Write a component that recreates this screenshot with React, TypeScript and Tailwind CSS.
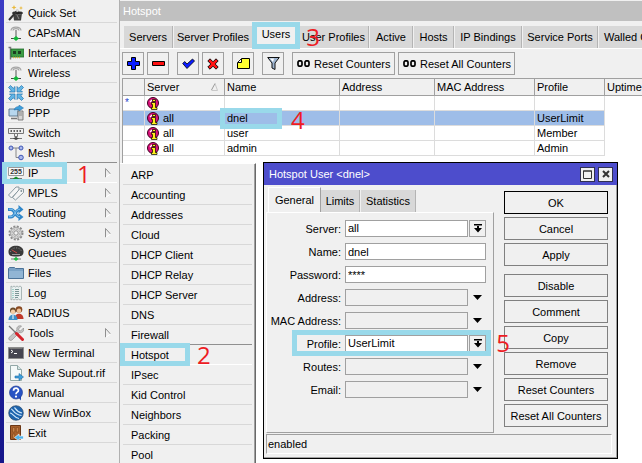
import React from "react";

type Kids = { children: React.ReactNode };

const Svg = ({ children }: Kids) => (
  <svg width="16" height="16" viewBox="0 0 16 16" className="shrink-0" aria-hidden="true">
    {children}
  </svg>
);

const Antenna = () => (
  <Svg>
    <path d="M3 5.500C3.500 1 12.500 1 13 5.500M5 5.500C5.500 3 10.500 3 11 5.500" fill="none" stroke="#a5a5a5" strokeWidth="1.200" />
    <path d="M8 5v8" stroke="#8a8a8a" strokeWidth="1.500" />
    <path d="M3 13.500h10" stroke="#444" strokeWidth="1" />
    <path d="M5 13.500l3-2.500 3 2.500-3 2.500z" fill="#12b83a" />
  </Svg>
);

const icons: Record<string, React.ReactNode> = {
  wand: (
    <Svg>
      <path d="M5 8h9l-1 7.500H6z" fill="#3f3f3f" />
      <ellipse cx="9.500" cy="8" rx="5.500" ry="1.600" fill="#222" stroke="#777" strokeWidth=".7" />
      <path d="M1 15L10 5" stroke="#333" strokeWidth="2" />
      <path d="M8.500 6.500L10.500 4.500" stroke="#ddd" strokeWidth="2" />
      <path d="M6 0l.7 1.800L8.500 2.500l-1.800.7L6 5l-.7-1.800L3.500 2.500l1.800-.7zM13 1l.6 1.400L15 3l-1.400.6L13 5l-.6-1.400L11 3l1.400-.6z" fill="#e9b93c" />
      <path d="M9 10l2 4" stroke="#888" />
    </Svg>
  ),
  antenna: <Antenna />,
  card: (
    <Svg>
      <path d="M.5 2.500h2v12" fill="none" stroke="#777" strokeWidth="1.500" />
      <path d="M3 4h13v8H3z" fill="#3c9c46" stroke="#1f6b2a" strokeWidth=".8" />
      <path d="M5 6h3v3H5zM10 6h3v3h-3z" fill="#1d3f22" />
      <path d="M5 12.500h8" stroke="#d1b13a" strokeWidth="1.500" strokeDasharray="1 1" />
    </Svg>
  ),
  bridge: (
    <Svg>
      <g fill="#62b6e6" stroke="#2272ad" strokeWidth=".7">
        <path d="M7 7H1.500l1.700-1.700L.5 2.500l2-2 2.800 2.700L7 1.500z" />
        <path d="M9 7h5.500l-1.700-1.700 2.700-2.800-2-2-2.800 2.700L9 1.500z" />
        <path d="M7 9v5.500l-1.700-1.700-2.800 2.700-2-2 2.700-2.800L1.500 9z" />
        <path d="M9 9v5.500l1.700-1.700 2.800 2.700 2-2-2.700-2.800L14.500 9z" />
      </g>
    </Svg>
  ),
  ppp: (
    <Svg>
      <path d="M1 4h9v7H1z" fill="#b7d7ee" stroke="#607b90" />
      <path d="M3 13.500h6" stroke="#777" strokeWidth="1.500" />
      <path d="M10 6h5v9h-5z" fill="#d5d5d5" stroke="#666" strokeWidth=".8" />
      <path d="M11 8h3M11 10h3" stroke="#777" strokeWidth=".8" />
      <path d="M6 5c1-3 3-3.500 5-3.500V0l4.500 3-4.500 3V4.500C9 4.500 8 4.500 6 5z" fill="#3d9fdc" stroke="#1e6ba5" strokeWidth=".5" />
    </Svg>
  ),
  switch: (
    <Svg>
      <path d="M.5 3.500h15v5H.5z" fill="#eee" stroke="#777" />
      <path d="M2.500 6h11" stroke="#333" strokeWidth="1.500" strokeDasharray="1.500 1.500" />
      <path d="M6.500 9v2.500h3V9M8 11v2M2 13.500h12" fill="none" stroke="#777" />
      <path d="M5 13.500l3-1.500 3 1.500-3 1.500z" fill="#444" />
    </Svg>
  ),
  mesh: (
    <Svg>
      <path d="M3 3h10M8 3v9.500h5" fill="none" stroke="#888" />
      <g fill="#a9b8ec" stroke="#3f56b5">
        <circle cx="3" cy="3" r="2" />
        <circle cx="13" cy="3" r="2" />
        <circle cx="13" cy="12.500" r="2.300" />
      </g>
    </Svg>
  ),
  ip: (
    <Svg>
      <path d="M.5 2.500h15v8H.5z" fill="#fafafa" stroke="#999" />
      <text x="8" y="9" textAnchor="middle" fontSize="7" fontWeight="bold" fill="#333" fontFamily="'Liberation Sans', sans-serif">
        255
      </text>
      <path d="M2 13.500h12" stroke="#777" />
      <path d="M5 13.500l3-2 3 2-3 2z" fill="#148a2c" />
    </Svg>
  ),
  tags: (
    <Svg>
      <g fill="#f5f5f5" stroke="#7f9097" strokeWidth=".9">
        <path d="M.5 10l7.500-8h3v3l-7.500 8z" />
        <path d="M4.500 12.500l7.500-9 3.500.5v3.500l-8 7.500z" />
      </g>
      <circle cx="13.300" cy="6" r=".9" fill="#7f9097" />
    </Svg>
  ),
  routing: (
    <Svg>
      <g fill="none" stroke="#2f86c9" strokeWidth="3">
        <path d="M0 4.500h3c4 0 4 7.500 9 7.500" />
        <path d="M0 12h3c4 0 4-7.500 9-7.500" />
      </g>
      <path d="M10.500 0l5 4.500-5 4zM10.500 8l5 4-5 4z" fill="#2f86c9" />
      <path d="M1 4.200h2c4 0 4 7.500 9 7.500M1 11.700h2c4 0 4-7.500 9-7.500" fill="none" stroke="#86c6f0" />
    </Svg>
  ),
  gear: (
    <Svg>
      <circle cx="8" cy="8" r="6.500" fill="none" stroke="#8b8b8b" strokeWidth="2" strokeDasharray="2 1.400" />
      <circle cx="8" cy="8" r="5.500" fill="#d9d9d9" stroke="#999" strokeWidth=".8" />
      <circle cx="8" cy="8" r="2.200" fill="#f3f3f3" stroke="#888" strokeWidth=".9" />
      <circle cx="8" cy="8" r="3.900" fill="none" stroke="#aaa" strokeWidth=".9" strokeDasharray="2 1" />
    </Svg>
  ),
  gauge: (
    <Svg>
      <path d="M.5 7C0-1.500 16-1.500 15.500 7c0 1.500-.5 2.500-1.500 3.500-2 1.300-10 1.300-12 0C1 9.500.5 8.500.5 7z" fill="#3a3a3a" />
      <path d="M2.500 7C3 1.500 13 1.500 13.500 7" fill="none" stroke="#888" strokeDasharray="1 1.500" />
      <path d="M4 5l5 3" stroke="#c44" />
      <path d="M4 9.500h8" stroke="#999" />
      <path d="M8 11v2M3 14h10" stroke="#777" />
      <path d="M5.500 14L8 12l2.500 2L8 16z" fill="#1dc340" />
    </Svg>
  ),
  folder: (
    <Svg>
      <path d="M.5 3.500l1-1h5l1 1h8v10H.5z" fill="#7ba3c6" stroke="#4c7398" />
      <path d="M1 6h14v7H1z" fill="#91b5d4" />
    </Svg>
  ),
  log: (
    <Svg>
      <path d="M3 1l1.500 1L6 1l1.500 1L9 1l1.500 1L12 1l1.500 1v12.500L12 15l-1.500-1L9 15l-1.500-1L6 15l-1.500-1L3 15z" fill="#e9f0f0" stroke="#98a7a7" strokeWidth=".8" />
      <path d="M7 4.500h4M7 6.500h4M7 8.500h4M7 10.500h4M7 12.500h3" stroke="#6d8b8b" strokeWidth=".9" />
      <path d="M5 4v9" stroke="#5fb3a6" strokeDasharray="1 1" />
    </Svg>
  ),
  people: (
    <Svg>
      <circle cx="11" cy="4.500" r="3.300" fill="#8a4a22" />
      <circle cx="11" cy="5.800" r="2.200" fill="#f0c39a" />
      <path d="M6.500 14c0-7 9-7 9 0z" fill="#c0392b" />
      <circle cx="5" cy="5.500" r="3" fill="#6b4a2a" />
      <circle cx="5" cy="6.700" r="2.200" fill="#f4cca5" />
      <path d="M.5 15c0-7 9-7 9 0z" fill="#3e8fc9" />
      <path d="M5 10v4" stroke="#fff" />
    </Svg>
  ),
  tools: (
    <Svg>
      <path d="M13.500 1l-3 3 .5 1.500 1.500.5 3-3c1 3-1.500 5.500-4 4.500L4 15c-2 1.500-4-1-3-2.500L9 5C8 2 11 0 13.500 1z" fill="#c4c4c4" stroke="#858585" strokeWidth=".6" />
      <path d="M1 1l8 8" stroke="#777" strokeWidth="1.300" />
      <path d="M8.500 8.500l6 6" stroke="#d4232b" strokeWidth="3" strokeLinecap="round" />
    </Svg>
  ),
  terminal: (
    <Svg>
      <path d="M.5 2.500h15v11H.5z" fill="#454550" stroke="#8d8d8d" />
      <path d="M1.500 3.500h13" stroke="#777" />
      <path d="M3 5l2 1.500L3 8M6 8.500h3" fill="none" stroke="#fff" />
    </Svg>
  ),
  supout: (
    <Svg>
      <path d="M2.500.5h7l4 4v11h-11z" fill="#f4f9f9" stroke="#93a8a8" />
      <path d="M9.500.5v4h4" fill="#d4e4e4" stroke="#93a8a8" />
      <path d="M7 11h4V8.500l4.500 3.500-4.500 3.500V13H7z" fill="#3d9fdc" stroke="#1e6ba5" strokeWidth=".6" />
    </Svg>
  ),
  manual: (
    <Svg>
      <path d="M10 12l3 3.500v-6z" fill="#2246b0" />
      <circle cx="8" cy="7.500" r="6.500" fill="#2853c4" stroke="#1c3a94" strokeWidth=".7" />
      <path d="M5.500 5.700C5.700 2.300 10.700 2.500 10.400 5.600 10.200 7.300 8 7.200 8 9.300" fill="none" stroke="#fff" strokeWidth="1.700" />
      <circle cx="8" cy="11.600" r="1.100" fill="#fff" />
    </Svg>
  ),
  winbox: (
    <Svg>
      <circle cx="8" cy="8" r="7.300" fill="#1d64ae" stroke="#2c4b6b" strokeWidth=".7" />
      <path d="M3 4C5 4 6 10 13.500 10.500M6.500 2.500c1 1 2 4.500 7.500 5.500M2 8c3 0 4 5 9 5.500" fill="none" stroke="#cfe6fa" strokeWidth="1.200" />
    </Svg>
  ),
  exit: (
    <Svg>
      <path d="M2.500.5h10v14h-10z" fill="#a9602c" stroke="#6b3715" />
      <path d="M4.500 2.500h2.300v4.500H4.500zM8.300 2.500h2.300v4.500H8.300zM4.500 9h2.300v4H4.500z" fill="#c98247" stroke="#7d4319" strokeWidth=".6" />
      <path d="M15.500 11H11V9l-4.500 3.500L11 16v-2h4.500z" fill="#4fb2ea" stroke="#fff" strokeWidth=".6" />
    </Svg>
  ),
};

const menu: { label: string; icon: string; sub?: boolean }[] = [
  { label: "Quick Set", icon: "wand" },
  { label: "CAPsMAN", icon: "antenna" },
  { label: "Interfaces", icon: "card" },
  { label: "Wireless", icon: "antenna" },
  { label: "Bridge", icon: "bridge" },
  { label: "PPP", icon: "ppp" },
  { label: "Switch", icon: "switch" },
  { label: "Mesh", icon: "mesh" },
  { label: "IP", icon: "ip", sub: true },
  { label: "MPLS", icon: "tags", sub: true },
  { label: "Routing", icon: "routing", sub: true },
  { label: "System", icon: "gear", sub: true },
  { label: "Queues", icon: "gauge" },
  { label: "Files", icon: "folder" },
  { label: "Log", icon: "log" },
  { label: "RADIUS", icon: "people" },
  { label: "Tools", icon: "tools", sub: true },
  { label: "New Terminal", icon: "terminal" },
  { label: "Make Supout.rif", icon: "supout" },
  { label: "Manual", icon: "manual" },
  { label: "New WinBox", icon: "winbox" },
  { label: "Exit", icon: "exit" },
];

const submenu = [
  "ARP", "Accounting", "Addresses", "Cloud", "DHCP Client", "DHCP Relay", "DHCP Server", "DNS",
  "Firewall", "Hotspot", "IPsec", "Kid Control", "Neighbors", "Packing", "Pool",
];

const tabs = [
  { label: "Servers", width: "w-[49px]" },
  { label: "Server Profiles", width: "w-[79px]" },
  { label: "Users", width: "w-11" },
  { label: "User Profiles", width: "w-[70px]" },
  { label: "Active", width: "w-[43px]" },
  { label: "Hosts", width: "w-10" },
  { label: "IP Bindings", width: "w-[67px]" },
  { label: "Service Ports", width: "w-[75px]" },
  { label: "Walled Garden", width: "w-[84px]" },
];

const users = [
  { flag: "*", server: "", name: "", profile: "" },
  { flag: "", server: "all", name: "dnel", profile: "UserLimit" },
  { flag: "", server: "all", name: "user", profile: "Member" },
  { flag: "", server: "all", name: "admin", profile: "Admin" },
];

/* Light blue frame drawn over a control that a step of the guide refers to. */
const Frame = ({ place }: { place: string }) => (
  <span className={`pointer-events-none absolute z-10 border-5 border-[#99d9ea] ${place}`} />
);

const Step = ({ n, place }: { n: number; place: string }) => (
  <span className={`pointer-events-none absolute z-20 font-['Open_Sans',sans-serif] text-2xl leading-6 text-[#ed1c24] ${place}`}>{n}</span>
);

const UserIcon = () => (
  <svg width="13" height="13" viewBox="0 0 13 13" className="shrink-0" aria-hidden="true">
    <circle cx="6" cy="6" r="5.500" fill="#e0107c" stroke="#3a0020" />
    <path d="M3 5l2-2" stroke="#fff" strokeWidth="1.200" />
    <path d="M5.500 2.500h3v2h-3zM4.500 5.500h4v5H10v2H4.500v-2h1v-3h-1z" fill="#ffef1a" stroke="#000" strokeWidth=".7" />
  </svg>
);

const ToolButton = ({ label, gap = "ml-[3px]", children }: { label: string; gap?: string } & Kids) => (
  <button type="button" aria-label={label} className={`flex h-[23px] w-[22px] shrink-0 items-center justify-center border border-[#a0a0a0] bg-[#f0f0f0] ${gap}`}>
    {children}
  </button>
);

const CounterButton = ({ label, size }: { label: string; size: string }) => (
  <button type="button" className={`flex h-[23px] shrink-0 items-center gap-1 border border-[#a0a0a0] bg-[#f0f0f0] pl-1 ${size}`}>
    <svg width="13" height="7" viewBox="0 0 13 7" className="shrink-0" aria-hidden="true">
      <rect x="1" y=".8" width="4" height="5.400" rx="1.500" fill="none" stroke="#000" strokeWidth="1.700" />
      <rect x="8" y=".8" width="4" height="5.400" rx="1.500" fill="none" stroke="#000" strokeWidth="1.700" />
    </svg>
    {label}
  </button>
);

const DropIcon = () => (
  <svg width="8" height="9" viewBox="0 0 8 9" className="shrink-0" aria-hidden="true">
    <path d="M0 0h8v1.500H0zM3 2h2v2h3L4 8.500 0 4h3z" />
  </svg>
);

type FieldProps = { label: string; kind: "select" | "text" | "empty"; value?: string; marked?: boolean };

const Field = ({ label, kind, value = "", marked }: FieldProps) => {
  const id = `field-${label.replace(" ", "-").toLowerCase()}`;
  return (
    <div className="relative flex h-[17px] items-center">
      <label htmlFor={id} className="w-[74px] shrink-0 text-right">
        {label}:
      </label>
      {kind === "select" && (
        <>
          <select id={id} defaultValue={value} className="ml-1 h-[17px] min-w-0 flex-1 appearance-none border border-[#a0a0a0] bg-white pl-[2px] leading-none">
            <option>{value}</option>
          </select>
          <button type="button" aria-label={`Choose ${label}`} className="ml-px flex h-[17px] w-[17px] shrink-0 items-center justify-center border border-[#a0a0a0]">
            <DropIcon />
          </button>
        </>
      )}
      {kind === "text" && <input id={id} defaultValue={value} className="ml-1 h-[17px] min-w-0 flex-1 border border-[#a0a0a0] bg-white pl-[2px]" />}
      {kind === "empty" && (
        <>
          <input id={id} defaultValue="" className="ml-1 h-[17px] min-w-0 flex-1 border border-[#a0a0a0] bg-[#f0f0f0]" />
          <button type="button" aria-label={`Expand ${label}`} className="flex h-[17px] w-[18px] shrink-0 items-center justify-center">
            <svg width="9" height="5" viewBox="0 0 9 5" aria-hidden="true">
              <path d="M0 0h9L4.500 5z" />
            </svg>
          </button>
        </>
      )}
      {marked && (
        <>
          <Frame place="-top-[5px] -right-[5px] -bottom-1 left-[25px]" />
          <Step n={5} place="-right-6 top-[-4px]" />
        </>
      )}
    </div>
  );
};

const ActionButton = ({ label, look = "border-[#808080]" }: { label: string; look?: string }) => (
  <button type="button" className={`h-[23px] w-full border bg-[#f0f0f0] ${look}`}>
    {label}
  </button>
);

const Dialog = () => (
  <section className="absolute top-[162px] left-[263px] flex w-[355px] flex-col border border-black bg-[#f0f0f0] pb-1 shadow-[inset_-1px_-1px_#a0a0a0]">
    <header className="flex h-[22px] items-center gap-[3px] bg-[#4d4dcc] pr-1 pl-[5px] text-white">
      <h2 className="flex-1">Hotspot User &lt;dnel&gt;</h2>
      <button type="button" aria-label="Maximize" className="flex h-[15px] w-[15px] items-center justify-center border border-[#303050] bg-[#f0f0f0]">
        <svg width="9" height="9" viewBox="0 0 9 9" aria-hidden="true">
          <path d="M.5 1h8v7.500h-8zM0 1h9" fill="none" stroke="#333" />
        </svg>
      </button>
      <button type="button" aria-label="Close" className="flex h-[15px] w-[15px] items-center justify-center border border-[#303050] bg-[#f0f0f0]">
        <svg width="8" height="8" viewBox="0 0 8 8" aria-hidden="true">
          <path d="M1 1l6 6M7 1L1 7" stroke="#333" strokeWidth="2" />
        </svg>
      </button>
    </header>
    <div className="flex gap-[10px] pr-[9px] pl-[2px]">
      <div className="min-w-0 flex-1 pt-[2px]">
        <div role="tablist" className="flex h-[25px] items-end pl-[2px]">
          <button type="button" role="tab" aria-selected="true" className="h-[25px] w-[53px] border-t border-r border-l border-t-white border-r-[#a0a0a0] border-l-white">
            General
          </button>
          <button type="button" role="tab" aria-selected="false" className="h-[22px] w-[39px] border-r border-[#b4b4b4] bg-[#d8d8d8]">
            Limits
          </button>
          <button type="button" role="tab" aria-selected="false" className="ml-px h-[22px] w-[55px] border-r border-[#b4b4b4] bg-[#d8d8d8]">
            Statistics
          </button>
        </div>
        <form className="flex h-[221px] flex-col gap-[6px] border border-t-white border-r-[#a0a0a0] border-b-[#a0a0a0] border-l-white pt-[7px] pr-[7px]">
          <Field label="Server" kind="select" value="all" />
          <Field label="Name" kind="text" value="dnel" />
          <Field label="Password" kind="text" value="****" />
          <Field label="Address" kind="empty" />
          <Field label="MAC Address" kind="empty" />
          <Field label="Profile" kind="select" value="UserLimit" marked />
          <Field label="Routes" kind="empty" />
          <Field label="Email" kind="empty" />
        </form>
      </div>
      <div className="flex w-[104px] shrink-0 flex-col gap-[3px] pt-[6px]">
        <ActionButton label="OK" look="border-black" />
        <ActionButton label="Cancel" />
        <ActionButton label="Apply" />
        <div className="h-[2px]" />
        <ActionButton label="Disable" />
        <ActionButton label="Comment" />
        <ActionButton label="Copy" />
        <ActionButton label="Remove" />
        <ActionButton label="Reset Counters" />
        <ActionButton label="Reset All Counters" />
      </div>
    </div>
    <footer className="mt-px mr-[5px] ml-[2px] flex h-5 items-center border border-t-[#a0a0a0] border-r-white border-b-white border-l-[#a0a0a0] pl-px">
      enabled
    </footer>
  </section>
);

const headCell = "h-[18px] border-t border-r border-b border-[#a0a0a0] px-[2px] text-left font-normal";
const cell = "h-[15px] border-r border-b border-[#dcdcdc] px-[2px]";

export default function App() {
  return (
    <div className="relative flex h-screen overflow-hidden bg-[#f0f0f0] font-['Liberation_Sans',Arial,sans-serif] text-[11px] leading-[14px] whitespace-nowrap text-black">
      <div className="w-1 shrink-0 bg-linear-to-b from-[#3c3cc4] to-[#15158a]" />
      <nav className="w-[116px] shrink-0 border-r border-[#b0b0b0] pt-[3px] pr-[2px] pl-[2px]">
        {menu.map((m) => (
          <button
            key={m.label}
            type="button"
            className={`relative flex h-5 w-full items-center border-b pl-[2px] text-left ${
              m.label === "Mesh" ? "border-[#909090]" : m.label === "IP" ? "border-white" : "border-[#d8d8d8]"
            }`}
          >
            {icons[m.icon]}
            <span className="ml-1 flex-1">{m.label}</span>
            {m.sub && (
              <svg width="6" height="10" viewBox="0 0 6 10" className="mr-[6px]" aria-hidden="true">
                <path d="M.5 9.500v-9L5.500 6" fill="none" stroke="#909090" />
                <path d="M5.500 6L.5 9.500" stroke="#fff" />
              </svg>
            )}
            {m.label === "IP" && (
              <>
                <Frame place="-top-px right-[50px] -bottom-[2px] -left-1" />
                <Step n={1} place="left-[71px] top-[-1px]" />
              </>
            )}
          </button>
        ))}
      </nav>
      <main className="flex min-w-0 flex-1 flex-col">
        <header className="mt-px flex h-5 shrink-0 items-center bg-[#c0c0c0] pl-[3px] text-white">Hotspot</header>
        <div role="tablist" className="flex h-[27px] shrink-0 items-end gap-px pl-1">
          {tabs.map((t) => (
            <button
              key={t.label}
              type="button"
              role="tab"
              aria-selected={t.label === "Users"}
              className={`relative shrink-0 ${t.width} ${
                t.label === "Users" ? "h-[25px] pb-1" : "h-[22px] border-r border-[#b4b4b4] bg-[#d8d8d8]"
              }`}
            >
              {t.label}
              {t.label === "Users" && (
                <>
                  <Frame place="-top-px -right-[2px] -bottom-px -left-[2px]" />
                  <Step n={3} place="-right-[22px] top-[2px]" />
                </>
              )}
            </button>
          ))}
        </div>
        <div className="flex h-[30px] shrink-0 items-center border-t border-white pl-[2px]">
          <ToolButton label="Add" gap="ml-0">
            <svg width="13" height="13" viewBox="0 0 13 13">
              <path d="M4.500.5h4v4h4v4h-4v4h-4v-4h-4v-4h4z" fill="#0a1cff" stroke="#000" />
            </svg>
          </ToolButton>
          <ToolButton label="Remove">
            <svg width="13" height="5" viewBox="0 0 13 5">
              <path d="M.5.5h12v4H.5z" fill="#ff1010" stroke="#000" />
            </svg>
          </ToolButton>
          <ToolButton label="Enable" gap="ml-2">
            <svg width="13" height="12" viewBox="0 0 13 12">
              <path d="M.7 5.500l2-2L5 6l5.500-5 2 2L5 10.500z" fill="#0a1cff" stroke="#000" strokeWidth=".8" />
            </svg>
          </ToolButton>
          <ToolButton label="Disable">
            <svg width="12" height="12" viewBox="0 0 12 12">
              <path d="M3 .8l3 3 3-3L11.200 3l-3 3 3 3L9 11.200l-3-3-3 3L.8 9l3-3-3-3z" fill="#ff1010" stroke="#000" strokeWidth=".9" />
            </svg>
          </ToolButton>
          <ToolButton label="Comment" gap="ml-2">
            <svg width="13" height="11" viewBox="0 0 13 11">
              <path d="M.5 4.500l4-4h8v10H.5z" fill="#ffff30" stroke="#000" />
              <path d="M1 4.500h3.500V1" fill="#fff" stroke="#000" />
            </svg>
          </ToolButton>
          <ToolButton label="Filter" gap="ml-2">
            <svg width="13" height="13" viewBox="0 0 13 13">
              <path d="M.7.5h11.600L8 6v6.500l-3-1.500V6z" fill="#9db4d0" stroke="#111" />
              <path d="M3 1.500h4L6 5" fill="#fff" />
            </svg>
          </ToolButton>
          <CounterButton label="Reset Counters" size="ml-2 w-[103px]" />
          <CounterButton label="Reset All Counters" size="ml-[3px] w-[117px]" />
        </div>
        <div className="ml-[2px] min-h-0 flex-1 border-l border-[#a0a0a0] bg-white">
          <table className="w-full table-fixed border-separate border-spacing-0">
            <colgroup>
              <col className="w-[22px]" />
              <col className="w-[80px]" />
              <col className="w-[115px]" />
              <col className="w-[95px]" />
              <col className="w-[100px]" />
              <col className="w-[70px]" />
              <col />
            </colgroup>
            <thead className="bg-[#f0f0f0]">
              <tr>
                <th className={headCell} />
                <th className={headCell}>
                  <div className="flex items-center justify-between pr-1">
                    Server
                    <svg width="7" height="8" viewBox="0 0 7 8" aria-hidden="true">
                      <path d="M.5 7L4 .5" stroke="#999" />
                      <path d="M4 .5L6.500 7.500H.5" fill="none" stroke="#c8c8c8" />
                    </svg>
                  </div>
                </th>
                <th className={headCell}>Name</th>
                <th className={headCell}>Address</th>
                <th className={headCell}>MAC Address</th>
                <th className={headCell}>Profile</th>
                <th className="h-[18px] border-t border-b border-[#a0a0a0] pl-[2px] text-left font-normal">Uptime</th>
              </tr>
            </thead>
            <tbody>
              {users.map((u, i) => (
                <tr key={i}>
                  <td className={`${cell} text-[10px] text-[#2244cc] ${i === 1 ? "bg-[#9ebde8]" : ""}`}>{u.flag}</td>
                  <td className={`${cell} ${i === 1 ? "bg-[#9ebde8]" : ""}`}>
                    <div className="flex items-center gap-[3px]">
                      <UserIcon />
                      {u.server}
                    </div>
                  </td>
                  <td className={`${cell} relative ${i === 1 ? "bg-[#9ebde8]" : ""}`}>
                    {u.name}
                    {i === 1 && (
                      <>
                        <Frame place="-top-[3px] right-[57px] -bottom-[4px] -left-[5px]" />
                        <Step n={4} place="left-[66px] top-[-3px]" />
                      </>
                    )}
                  </td>
                  <td className={`${cell} ${i === 1 ? "bg-[#9ebde8]" : ""}`} />
                  <td className={`${cell} ${i === 1 ? "bg-[#9ebde8]" : ""}`} />
                  <td className={`${cell} ${i === 1 ? "bg-[#9ebde8]" : ""}`}>{u.profile}</td>
                  <td />
                </tr>
              ))}
            </tbody>
          </table>
        </div>
      </main>
      <div role="menu" className="absolute top-[163px] left-[120px] w-[136px] border-t border-r border-t-white border-r-[#696969] bg-[#f0f0f0] pt-px pr-[3px] pl-[3px] shadow-[inset_-1px_0_#a0a0a0]">
        {submenu.map((s) => (
          <button
            key={s}
            type="button"
            role="menuitem"
            className={`relative block h-5 w-full border-b pl-2 text-left ${
              s === "Firewall" ? "border-[#909090]" : s === "Hotspot" ? "border-white" : "border-[#d8d8d8]"
            }`}
          >
            {s}
            {s === "Hotspot" && (
              <>
                <Frame place="-top-[2px] right-[62px] -bottom-[2px] -left-[3px]" />
                <Step n={2} place="left-[74px] top-[-2px]" />
              </>
            )}
          </button>
        ))}
      </div>
      <Dialog />
    </div>
  );
}
